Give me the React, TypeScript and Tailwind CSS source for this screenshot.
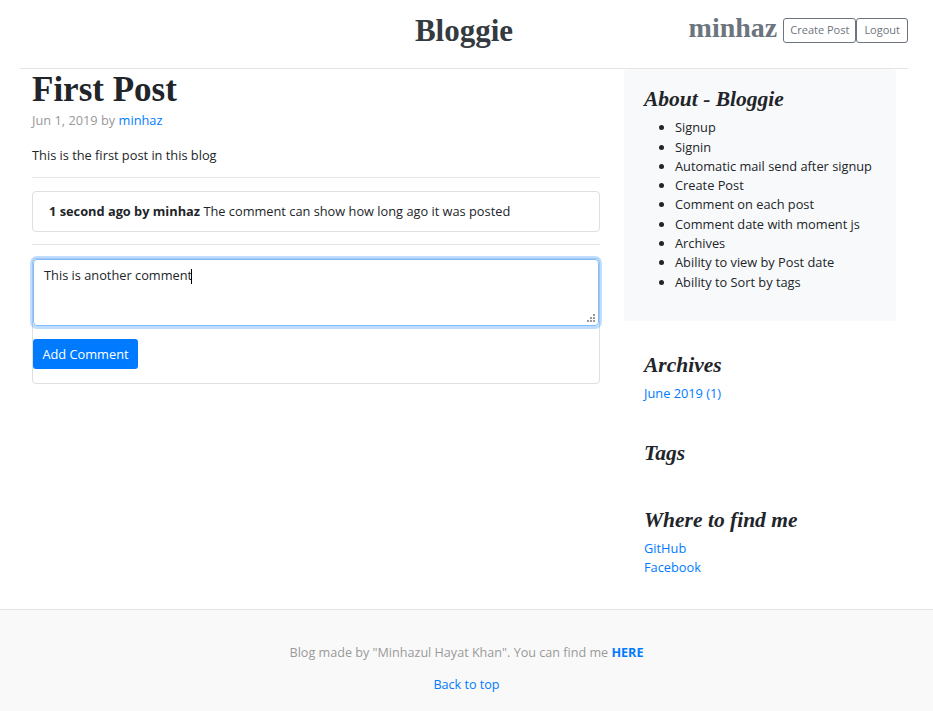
import React from "react";

const serif = { fontFamily: '"Liberation Serif", "DejaVu Serif", serif' };

export default function App() {
  return (
    <div className="min-h-[711px] flex flex-col bg-white text-[#212529]" style={{ fontFamily: '"Open Sans", "Noto Sans", sans-serif' }}>
      <div className="ml-[20px] w-[888px]">
        <header className="h-[69px] border-b border-[#e5e5e5] flex items-center relative">
          <div className="flex-1" />
          <div className="absolute left-0 right-0 text-center pointer-events-none pb-[6px]">
            <span className="text-[31px] font-bold text-[#343a40]" style={serif}>Bloggie</span>
          </div>
          <div className="flex-1 flex justify-end items-center gap-[6px] mt-[-8px]">
            <span className="text-[28px] font-bold text-[#6c757d] leading-none mb-[4px]" style={serif}>minhaz</span>
            <div className="flex">
              <button className="h-[25px] px-[6px] border border-[#6c757d] rounded-[3px] text-[11px] text-[#6c757d] bg-white">Create Post</button>
              <button className="h-[25px] px-[7px] border border-[#6c757d] rounded-[3px] text-[11px] text-[#6c757d] bg-white">Logout</button>
            </div>
          </div>
        </header>
        <div className="flex pl-3 gap-6">
          <main className="w-[568px] text-[12.8px]">
            <h1 className="text-[35px] font-bold leading-[1.2] text-[#212529]" style={serif}>First Post</h1>
            <p className="text-[#999] leading-[1.5]">Jun 1, 2019 by <a className="text-[#007bff]">minhaz</a></p>
            <p className="mt-[16px] leading-[1.5]">This is the first post in this blog</p>
            <hr className="border-t border-[#e5e5e5] mt-[12px]" />
            <div className="mt-[13px] border border-[#dfdfdf] rounded-[4px] h-[41px] flex items-center px-4">
              <span className="font-bold">1 second ago by minhaz</span>
              <span>&nbsp;The comment can show how long ago it was posted</span>
            </div>
            <hr className="border-t border-[#e5e5e5] mt-[12px]" />
            <div className="mt-[13px] border border-[#dfdfdf] rounded-[4px] h-[126px]">
              <div className="relative h-[67px] border border-[#80bdff] rounded-[4px] shadow-[0_0_0_3px_rgba(0,123,255,0.25)] px-[10px] py-[6px]">
                <span>This is another comment</span>
                <span className="inline-block w-px h-[15px] bg-black align-middle -ml-px" />
                <svg className="absolute right-[3px] bottom-[3px]" width="8" height="8" viewBox="0 0 8 8">
                  <g fill="#999">
                    <rect x="6" y="0" width="2" height="2" />
                    <rect x="3" y="3" width="2" height="2" />
                    <rect x="6" y="3" width="2" height="2" />
                    <rect x="0" y="6" width="2" height="2" />
                    <rect x="3" y="6" width="2" height="2" />
                    <rect x="6" y="6" width="2" height="2" />
                  </g>
                </svg>
              </div>
              <button className="mt-[13px] h-[30px] w-[105px] bg-[#007bff] text-white rounded-[3px] text-[12.8px]">Add Comment</button>
            </div>
          </main>
          <aside className="w-[272px] text-[12.8px]">
            <div className="bg-[#f8f9fa] rounded-[4px] px-5 pt-[18px] pb-[29px]">
              <h4 className="text-[21.5px] font-bold italic leading-[1.2]" style={serif}>About - Bloggie</h4>
              <ul className="list-disc pl-[31px] mt-[5.5px] leading-[19.3px]">
                <li>Signup</li>
                <li>Signin</li>
                <li>Automatic mail send after signup</li>
                <li>Create Post</li>
                <li>Comment on each post</li>
                <li>Comment date with moment js</li>
                <li>Archives</li>
                <li>Ability to view by Post date</li>
                <li>Ability to Sort by tags</li>
              </ul>
            </div>
            <div className="px-5 mt-[32px]">
              <h4 className="text-[21.5px] font-bold italic leading-[1.2]" style={serif}>Archives</h4>
              <a className="block text-[#007bff] leading-[19.3px] mt-[5.5px]">June 2019 (1)</a>
            </div>
            <div className="px-5 mt-[37.5px]">
              <h4 className="text-[21.5px] font-bold italic leading-[1.2]" style={serif}>Tags</h4>
            </div>
            <div className="px-5 mt-[41px]">
              <h4 className="text-[21.5px] font-bold italic leading-[1.2]" style={serif}>Where to find me</h4>
              <a className="block text-[#007bff] leading-[19.3px] mt-[5.5px]">GitHub</a>
              <a className="block text-[#007bff] leading-[19.3px]">Facebook</a>
            </div>
          </aside>
        </div>
      </div>
      <footer className="mt-auto h-[102px] border-t border-[#e5e5e5] bg-[#f9f9f9] text-center text-[12.6px] pt-[34px]">
        <p className="text-[#999] leading-[1.5]">Blog made by "Minhazul Hayat Khan". You can find me <a className="text-[#007bff] font-bold">HERE</a></p>
        <p className="mt-[13px] leading-[1.5]"><a className="text-[#007bff]">Back to top</a></p>
      </footer>
    </div>
  );
}
